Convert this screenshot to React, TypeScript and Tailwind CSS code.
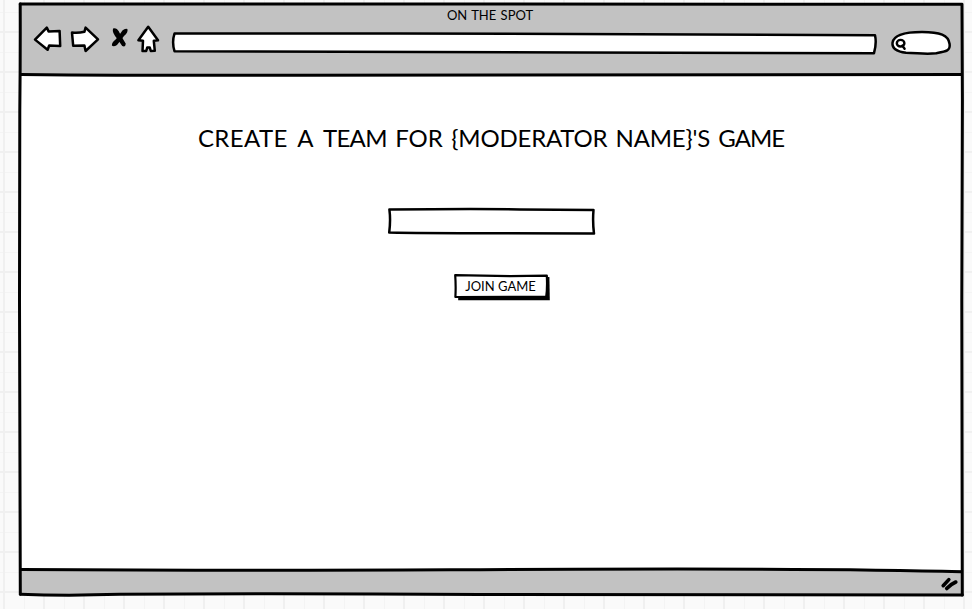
import React from "react";

const stroke = {
  fill: "none",
  stroke: "#000",
  strokeLinecap: "round" as const,
  strokeLinejoin: "round" as const,
};

function NavIcons() {
  return (
    <svg className="block h-[32px] w-[130px] shrink-0" viewBox="32 24 130 32" aria-hidden="true">
      <g {...stroke} fill="#fff" strokeWidth="2.5">
        <path d="M35 39.6 L46.8 27.6 L48.6 31.4 L59.6 30.9 L60.2 46 L49.2 45.5 L47.6 49.8 Z" />
        <path d="M72 32.6 Q78 33.4 84.4 31.8 L85.6 27.6 L98 39.4 L85.6 51 L84.4 45.5 L73.2 45.8 Z" />
        <path d="M148.2 26.8 L138.4 40.2 L143 40.7 L142.5 51 L146.2 51 L147.2 47.6 L149.8 47.6 L150.8 51 L154.8 50.8 L153.8 40.8 L158 40.3 Z" />
      </g>
      <path d="M113 28.6 Q116.5 27 118.6 31 L121.2 36 L125.8 43.8 Q125.4 47.6 122.2 46 L117.4 39 Q111.8 33 113 28.6 Z" />
      <path d="M127.4 29 Q128.4 32.6 124 36 L120.6 40.4 L117 45 Q113.6 47 111.9 45.6 Q111.6 42.6 115.6 39.6 L118.6 36 L122.4 30.4 Q125 28.2 127.4 29 Z" />
    </svg>
  );
}

function AddressBar() {
  return (
    <svg className="block h-[26px] w-[708px] shrink-0" viewBox="170 30 708 26" aria-hidden="true">
      <path
        {...stroke}
        fill="#fff"
        strokeWidth="2.5"
        d="M174.5 33.6 L400 33.4 Q620 34.2 875 35.2 Q876.8 43 874 53.2 L580 52.6 Q380 51.8 174.5 51.2 Q171.7 42 174.5 33.6 Z"
      />
    </svg>
  );
}

function SearchBox() {
  return (
    <svg className="block h-[28px] w-[64px] shrink-0" viewBox="889 29 64 28" aria-hidden="true">
      <g {...stroke}>
        <path
          fill="#fff"
          strokeWidth="2.5"
          d="M906 52.8 C896 51.4 892 48 892.5 42.8 C893.5 35 904 32 922 32 C940 32 948.5 35 949.6 44 C950.6 51 946 51.5 936 53.3 C925 54.8 917 52.8 906 52.8 Z"
        />
        <ellipse cx="900.6" cy="43.2" rx="3.8" ry="3.3" strokeWidth="2.4" />
        <path strokeWidth="2.4" d="M902.3 45.6 L904.6 48.8" />
      </g>
    </svg>
  );
}

function FrameStrokes() {
  return (
    <svg className="pointer-events-none absolute inset-0 h-[609px] w-[972px]" viewBox="0 0 972 609" aria-hidden="true">
      <g {...stroke} strokeWidth="3">
        <path d="M20.2 4 L962 4.2 L962.4 100 L961.8 300 L962 420 L962.3 595" />
        <path d="M20.2 4 Q20.4 60 19.8 110 L19.5 300 Q19.5 480 20.3 594.2" />
        <path d="M20.3 594.2 Q65 596 120 594.3 Q280 593 480 594.6 L962.3 595" />
        <path d="M21 74.4 Q150 75.7 300 75.2 Q620 76 961 74.4" />
        <path d="M21 569.4 Q220 570.8 450 569.8 Q820 567.6 961 571.8" />
      </g>
    </svg>
  );
}

export default function App() {
  return (
    <div
      className="relative h-[609px] w-[972px] overflow-hidden bg-[#fafafa] bg-[linear-gradient(to_right,#f0f0f0_2px,transparent_2px),linear-gradient(to_bottom,#f0f0f0_2px,transparent_2px),linear-gradient(to_right,#f4f4f4_1px,transparent_1px),linear-gradient(to_bottom,#f4f4f4_1px,transparent_1px)] bg-size-[40px_40px] bg-position-[3px_0px,0px_31px,24px_0px,0px_12px] pt-1 pl-5 font-['Lato','Open_Sans',sans-serif] text-black"
    >
      <div className="flex h-[591px] w-[942px] flex-col bg-white">
        <header className="flex h-[71px] shrink-0 flex-col bg-[#c2c2c2]">
          <div className="flex h-[20px] justify-center pt-[3px] pr-[2px]">
            <span className="text-[13px] leading-[17px] [word-spacing:1px] whitespace-nowrap">ON THE SPOT</span>
          </div>
          <div className="flex h-[36px] items-start pl-3">
            <NavIcons />
            <div className="pt-[6px] pl-2">
              <AddressBar />
            </div>
            <div className="pt-[5px] pl-[11px]">
              <SearchBox />
            </div>
          </div>
        </header>
        <main className="flex flex-1 flex-col items-center">
          <h1 className="mt-[48px] text-[24px] leading-[30px] [word-spacing:2.3px] whitespace-nowrap">
            <span className="tracking-[0.4px]">CREATE</span> <span className="mx-px">A</span>{" "}
            <span className="tracking-[-0.7px]">TEAM</span> FOR{" "}
            <span className="tracking-[-0.2px]">{"{MODERATOR NAME}'S "}</span>
            <span className="tracking-[-1px]">GAME</span>
          </h1>
          <div className="mt-[53px] h-[30px] w-[210px]">
            <svg className="block h-[30px] w-[210px]" viewBox="386 206 210 30" aria-hidden="true">
              <path
                {...stroke}
                fill="#fff"
                strokeWidth="2.5"
                d="M389.4 209.6 Q470 208.7 520 209.4 L593.5 210 Q592.5 222 594 233.6 L500 233.2 Q430 233.4 389.2 232.6 Q390.8 220 389.4 209.6 Z"
              />
            </svg>
          </div>
          <button className="relative mt-[37px] ml-[22px] h-[28px] w-[98px] text-center">
            <svg className="absolute inset-0 h-[28px] w-[98px]" viewBox="453 273 98 28" aria-hidden="true">
              <path d="M458 279 L549.4 277 L549.8 300.2 L458.2 300.2 Z" />
              <path
                {...stroke}
                fill="#fff"
                strokeWidth="2.2"
                d="M455.2 275.2 L510 276.2 L546.8 275.6 Q547.5 288 546.2 296.8 L455.4 297 Q456 286 455.2 275.2 Z"
              />
            </svg>
            <span className="relative block pr-[3px] pb-[2px] text-[13px] leading-[24px] whitespace-nowrap">
              JOIN GAME
            </span>
          </button>
        </main>
        <footer className="flex h-[25px] shrink-0 items-center justify-end bg-[#c2c2c2] pr-[2px]">
          <svg className="mt-[2px] block h-[18px] w-[20px]" viewBox="940 575 20 18" aria-hidden="true">
            <g {...stroke} strokeWidth="3.6">
              <path d="M943.2 585.7 L948.8 579.6" />
              <path d="M946.7 588.5 Q950.2 584.5 955.8 582" />
            </g>
          </svg>
        </footer>
      </div>
      <FrameStrokes />
    </div>
  );
}
